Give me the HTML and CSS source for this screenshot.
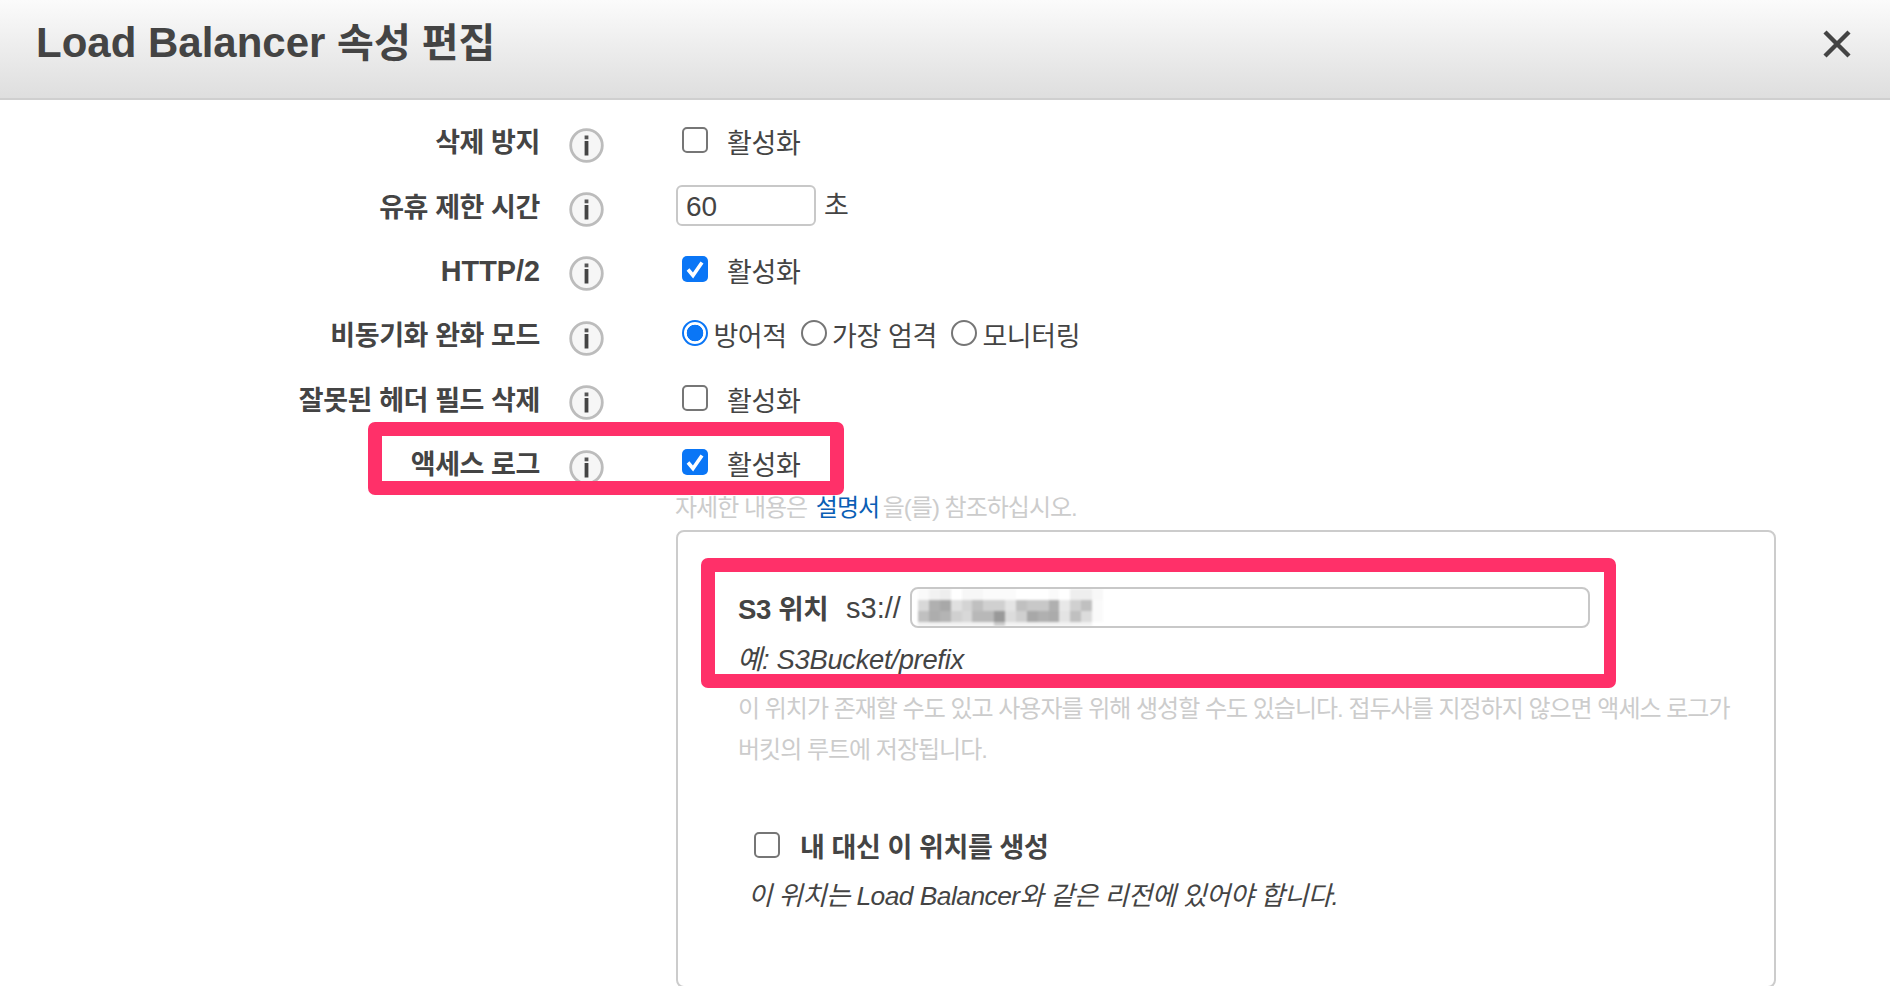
FILE: index.html
```html
<!DOCTYPE html>
<html lang="ko">
<head>
<meta charset="utf-8">
<title>Load Balancer 속성 편집</title>
<link rel="stylesheet" href="styles.css">
</head>
<body>
<svg class="defs" width="0" height="0" aria-hidden="true"><defs>
  <g id="info-glyph"><circle cx="17.5" cy="17.5" r="15.8" fill="#f6f6f6" stroke="#bcbcbc" stroke-width="2.8"/><rect x="15.6" y="7.5" width="3.8" height="3.8" fill="#555"/><rect x="15.6" y="13" width="3.8" height="14.5" fill="#444"/></g>
  <path id="tick" d="M6 13.5 L11 19.5 L20 6.5" stroke="#fff" stroke-width="3.6" fill="none"/>
</defs></svg>
<header class="header">
  <h1 class="title">Load Balancer <span class="title-ko">속성 편집</span></h1>
  <svg class="close" viewBox="0 0 28 28" width="28" height="28"><path d="M2 2 L26 26 M26 2 L2 26" stroke="#444" stroke-width="4.4" fill="none"/></svg>
</header>
<main class="form">
  <div class="row">
    <div class="label">삭제 방지</div>
    <svg class="info" viewBox="0 0 35 35"><use href="#info-glyph"/></svg>
    <div class="control"><span class="check"></span><span class="check-text">활성화</span></div>
  </div>
  <div class="row">
    <div class="label">유휴 제한 시간</div>
    <svg class="info" viewBox="0 0 35 35"><use href="#info-glyph"/></svg>
    <div class="control control-input"><span class="timeout">60</span><span class="unit">초</span></div>
  </div>
  <div class="row">
    <div class="label label-latin">HTTP/2</div>
    <svg class="info" viewBox="0 0 35 35"><use href="#info-glyph"/></svg>
    <div class="control"><span class="check is-on"><svg viewBox="0 0 26 26" width="26" height="26"><use href="#tick"/></svg></span><span class="check-text">활성화</span></div>
  </div>
  <div class="row">
    <div class="label">비동기화 완화 모드</div>
    <svg class="info" viewBox="0 0 35 35"><use href="#info-glyph"/></svg>
    <div class="control">
      <span class="radio is-on"></span><span class="radio-text">방어적</span>
      <span class="radio"></span><span class="radio-text">가장 엄격</span>
      <span class="radio"></span><span class="radio-text">모니터링</span>
    </div>
  </div>
  <div class="row">
    <div class="label">잘못된 헤더 필드 삭제</div>
    <svg class="info" viewBox="0 0 35 35"><use href="#info-glyph"/></svg>
    <div class="control"><span class="check"></span><span class="check-text">활성화</span></div>
  </div>
  <div class="row">
    <div class="label">액세스 로그</div>
    <svg class="info" viewBox="0 0 35 35"><use href="#info-glyph"/></svg>
    <div class="control"><span class="check is-on"><svg viewBox="0 0 26 26" width="26" height="26"><use href="#tick"/></svg></span><span class="check-text">활성화</span></div>
  </div>
  <p class="help">자세한 내용은 <a class="link">설명서</a> 을(를) 참조하십시오.</p>
  <section class="panel">
    <div class="s3-row">
      <strong class="s3-label">S3 위치</strong>
      <span class="s3-scheme">s3://</span>
      <div class="s3-input">
        <svg class="mosaic" viewBox="0 0 17 3.4" width="187" height="37" shape-rendering="crispEdges">
          <rect x="0" y="0" width="1" height="1" fill="#fafafa"/><rect x="1" y="0" width="1" height="1" fill="#f2f2f2"/><rect x="2" y="0" width="1" height="1" fill="#eee"/><rect x="4" y="0" width="2" height="1" fill="#f7f7f7"/><rect x="6" y="0" width="3" height="1" fill="#fbfbfb"/><rect x="12" y="0" width="1" height="1" fill="#fafafa"/><rect x="14" y="0" width="2" height="1" fill="#eee"/><rect x="16" y="0" width="1" height="1" fill="#f8f8f8"/>
          <rect x="0" y="1" width="1" height="1" fill="#d8d8d8"/><rect x="1" y="1" width="1" height="1" fill="#b0b0b0"/><rect x="2" y="1" width="1" height="1" fill="#a8a8a8"/><rect x="3" y="1" width="1" height="1" fill="#e0e0e0"/><rect x="4" y="1" width="1" height="1" fill="#d4d4d4"/><rect x="5" y="1" width="1" height="1" fill="#c0c0c0"/><rect x="6" y="1" width="2" height="1" fill="#d0d0d0"/><rect x="8" y="1" width="1" height="1" fill="#e4e4e4"/><rect x="9" y="1" width="1" height="1" fill="#c0c0c0"/><rect x="10" y="1" width="2" height="1" fill="#c8c8c8"/><rect x="12" y="1" width="1" height="1" fill="#b0b0b0"/><rect x="13" y="1" width="1" height="1" fill="#e8e8e8"/><rect x="14" y="1" width="1" height="1" fill="#d0d0d0"/><rect x="15" y="1" width="1" height="1" fill="#c0c0c0"/><rect x="16" y="1" width="1" height="1" fill="#fafafa"/>
          <rect x="0" y="2" width="1" height="1" fill="#c0c0c0"/><rect x="1" y="2" width="1" height="1" fill="#adadad"/><rect x="2" y="2" width="1" height="1" fill="#b4b4b4"/><rect x="3" y="2" width="1" height="1" fill="#d0d0d0"/><rect x="4" y="2" width="1" height="1" fill="#d8d8d8"/><rect x="5" y="2" width="2" height="1" fill="#b8b8b8"/><rect x="7" y="2" width="1" height="1" fill="#999"/><rect x="8" y="2" width="1" height="1" fill="#dcdcdc"/><rect x="9" y="2" width="1" height="1" fill="#cfcfcf"/><rect x="10" y="2" width="1" height="1" fill="#a8a8a8"/><rect x="11" y="2" width="1" height="1" fill="#b0b0b0"/><rect x="12" y="2" width="1" height="1" fill="#ababab"/><rect x="13" y="2" width="1" height="1" fill="#e4e4e4"/><rect x="14" y="2" width="1" height="1" fill="#c0c0c0"/><rect x="15" y="2" width="1" height="1" fill="#dcdcdc"/><rect x="16" y="2" width="1" height="1" fill="#fafafa"/>
          <rect x="0" y="3" width="16" height="0.4" fill="#f2f2f2"/><rect x="7" y="3" width="1" height="0.4" fill="#ccc"/>
        </svg>
      </div>
    </div>
    <p class="example">예: S3Bucket/prefix</p>
    <p class="note">이 위치가 존재할 수도 있고 사용자를 위해 생성할 수도 있습니다. 접두사를 지정하지 않으면 액세스 로그가</p>
    <p class="note note-second">버킷의 루트에 저장됩니다.</p>
    <div class="create-row"><span class="check"></span><span class="create-text">내 대신 이 위치를 생성</span></div>
    <p class="create-note">이 위치는 Load Balancer와 같은 리전에 있어야 합니다.</p>
  </section>
</main>
<div class="mark mark-access"></div>
<div class="mark mark-s3"></div>
</body>
</html>
```
FILE: styles.css
```css
html, body { margin: 0; padding: 0; height: 986px; overflow: hidden; background: #fff; }
body {
  font-family: "Liberation Sans", "Noto Sans CJK KR", sans-serif;
  color: #444;
  position: relative;
}
.defs { position: absolute; }
.header {
  height: 84px;
  border-bottom: 2px solid #cfcfcf;
  background: linear-gradient(#fbfbfb, #dedede);
  display: flex;
  align-items: center;
  justify-content: space-between;
  padding: 0 39px 14px 36px;
}
.title { margin: 2px 0 0; font-size: 42px; font-weight: 700; color: #444; line-height: 50px; }
.title-ko { font-size: 40px; }
.close { display: block; margin-top: 4px; }
.form { padding-top: 13px; }
.row {
  height: 64.4px;
  display: flex;
  align-items: center;
  font-size: 27px;
}
.label {
  width: 540px;
  text-align: right;
  font-weight: 700;
  color: #444;
  padding-bottom: 4px;
  line-height: 40px;
  letter-spacing: -0.4px;
}
.label-latin { font-size: 28.8px; letter-spacing: 0; padding-bottom: 6px; }
.info { width: 35px; height: 35px; margin-left: 29px; flex: none; filter: blur(0.5px); }
.control { margin-left: 78px; display: flex; align-items: center; padding-bottom: 10px; line-height: 36px; color: #444; }
.control-input { margin-left: 72px; padding-bottom: 8px; }
.check, .radio { display: block; width: 26px; height: 26px; box-sizing: border-box; flex: none; }
.check { border: 2px solid #767676; border-radius: 5px; background: #fff; }
.check.is-on { border: 0; background: #0a76f6; }
.check svg { display: block; }
.check-text { margin-left: 19px; letter-spacing: -0.4px; position: relative; top: 4px; }
.radio { border: 2px solid #767676; border-radius: 50%; background: #fff; }
.radio.is-on { border: 2px solid #0a76f6; background: radial-gradient(circle, #0a76f6 0 8px, #fff 8.6px); }
.radio-text { margin-left: 5.4px; margin-right: 14px; letter-spacing: -0.4px; position: relative; top: 4px; }
.timeout {
  display: block; width: 140px; height: 41px; box-sizing: border-box;
  border: 2px solid #c8c8c8; border-radius: 6px;
  padding-left: 8px; line-height: 39px; font-size: 28px; color: #444;
}
.unit { margin-left: 8px; letter-spacing: -0.4px; position: relative; top: 0; }
.help {
  margin: -2px 0 0 675px;
  font-size: 24px; line-height: 22px; height: 22px; color: #ccc; letter-spacing: -1px;
}
.link { color: #0a5eb5; margin-left: 3px; margin-right: -2px; }
.panel {
  margin: 11px 0 0 676px;
  width: 1100px;
  height: 458px;
  box-sizing: border-box;
  border: 2px solid #ccc;
  border-radius: 8px;
  padding: 54px 0 0 60px;
}
.s3-row { display: flex; align-items: center; height: 42px; }
.s3-label { font-size: 27.6px; font-weight: 700; color: #444; letter-spacing: -0.4px; width: 108px; flex: none; }
.s3-scheme { font-size: 29px; color: #444; width: 64px; flex: none; position: relative; top: 1px; }
.s3-input {
  width: 680px; height: 41px; box-sizing: border-box;
  border: 2px solid #c8c8c8; border-radius: 8px; padding: 0 0 0 5px; overflow: hidden;
}
.mosaic { display: block; filter: blur(0.8px); }
.example { margin: 14px 0 0 -1px; font-size: 27.4px; line-height: 36px; font-style: italic; color: #444; letter-spacing: -0.3px; }
.note { margin: 18px 0 0; font-size: 24px; line-height: 26px; color: #ccc; letter-spacing: -1px; white-space: nowrap; }
.note-second { margin-top: 15px; }
.create-row { display: flex; align-items: center; margin: 68px 0 0 16px; height: 28px; }
.create-text { margin-left: 20px; font-size: 27px; font-weight: 700; color: #444; letter-spacing: -0.4px; }
.create-note { margin: 22px 0 0 10px; font-size: 26.4px; line-height: 30px; font-style: italic; color: #444; letter-spacing: -0.55px; white-space: nowrap; }
.mark { position: absolute; box-sizing: border-box; border: 14px solid #ff3069; border-radius: 7px; }
.mark-access { left: 368px; top: 422px; width: 476px; height: 73px; }
.mark-s3 { left: 701px; top: 558px; width: 915px; height: 130px; border-right-width: 12px; }
```
